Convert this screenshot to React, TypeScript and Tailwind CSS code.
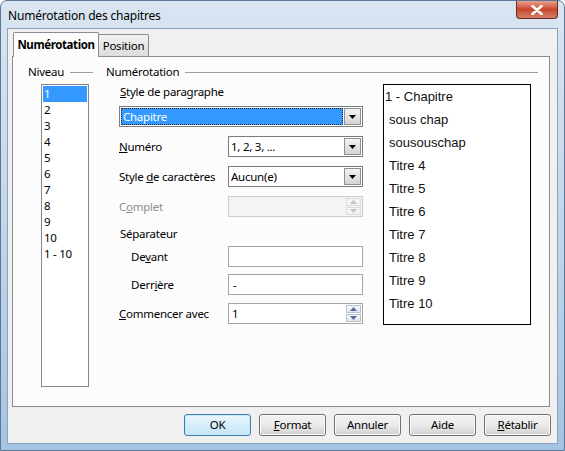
import React from "react";

const ui = { fontFamily: '"Noto Sans", "Open Sans", sans-serif' };
const arial = { fontFamily: '"Liberation Sans", Arial, sans-serif' };

function Arrow({ up = false, color = "#000" }: { up?: boolean; color?: string }) {
  return (
    <svg width="7" height="4" viewBox="0 0 7 4">
      <path d={up ? "M0 4 L3.5 0 L7 4 Z" : "M0 0 L7 0 L3.5 4 Z"} fill={color} />
    </svg>
  );
}

function DropButton() {
  return (
    <div className="w-[17px] h-full flex items-center justify-center border border-[#8e8f8f] bg-gradient-to-b from-[#f4f4f4] to-[#d4d4d4]">
      <Arrow />
    </div>
  );
}

function Combo({ value, selected = false, className = "" }: { value: string; selected?: boolean; className?: string }) {
  return (
    <div className={"h-[21px] flex border border-[#7b7b7b] bg-white p-[1px] " + className}>
      {selected ? (
        <div className="flex-1 flex items-center bg-[#3399ff] text-white pl-[2px] outline outline-1 outline-dotted outline-[#222] -outline-offset-1 mr-[1px]">
          {value}
        </div>
      ) : (
        <div className="flex-1 flex items-center pl-[1px] text-black">{value}</div>
      )}
      <DropButton />
    </div>
  );
}

function Spin({ value = "", disabled = false }: { value?: string; disabled?: boolean }) {
  const c = disabled ? "#c4c4c4" : "#4e6d9a";
  const btn = disabled
    ? "border-[#dcdcdc] bg-[#f4f4f4]"
    : "border-[#b9c3d0] bg-gradient-to-b from-[#f8f8f8] to-[#e2e6ea]";
  return (
    <div
      className={
        "w-[135px] h-[21px] flex border p-[1px] " +
        (disabled ? "border-[#c9cdd2] bg-[#f4f4f4]" : "border-[#a5a5a5] bg-white")
      }
    >
      <div className="flex-1 flex items-center pl-[2px]">{value}</div>
      <div className="w-[15px] flex flex-col gap-[1px]">
        <div className={"flex-1 flex items-center justify-center border " + btn}>
          <Arrow up color={c} />
        </div>
        <div className={"flex-1 flex items-center justify-center border " + btn}>
          <Arrow color={c} />
        </div>
      </div>
    </div>
  );
}

function TextBox({ value = "" }: { value?: string }) {
  return (
    <div className="w-[135px] h-[21px] flex items-center border border-[#a5a5a5] bg-white pl-[4px]">{value}</div>
  );
}

function Btn({ children, def = false }: { children: React.ReactNode; def?: boolean }) {
  return (
    <div
      className={
        "w-[67px] h-[22px] flex items-center justify-center rounded-[3px] border text-black " +
        (def
          ? "border-[#3c7fb1] bg-gradient-to-b from-[#eaf6fd] to-[#c4e5f6] shadow-[inset_0_0_0_1px_#c7e8fa]"
          : "border-[#707070] bg-gradient-to-b from-[#f2f2f2] via-[#ebebeb] to-[#d0d0d0] shadow-[inset_0_0_0_1px_#fcfcfc]")
      }
    >
      {children}
    </div>
  );
}

const levels = ["1", "2", "3", "4", "5", "6", "7", "8", "9", "10", "1 - 10"];
const preview = ["1 - Chapitre", "sous chap", "sousouschap", "Titre 4", "Titre 5", "Titre 6", "Titre 7", "Titre 8", "Titre 9", "Titre 10"];

export default function App() {
  return (
    <div
      className="w-[565px] h-[451px] rounded-t-[7px] bg-gradient-to-b from-[#d9e5f1] via-[#c3d6ea] to-[#a4c4e4] border border-[#5a7795] text-[11.5px] tracking-[-0.25px] text-black overflow-hidden"
      style={ui}
    >
      <div className="h-[27px] flex items-start">
        <span className="ml-[7px] mt-[6px] text-[12px] tracking-[-0.2px] text-black">Numérotation des chapitres</span>
        <div className="ml-auto mr-[6px] w-[42px] h-[18px] rounded-b-[4px] border border-t-0 border-[#6b2a22] bg-gradient-to-b from-[#e8a08e] via-[#c8462d] to-[#d2806a] flex items-center justify-center">
          <svg width="12" height="10" viewBox="0 0 12 10">
            <path d="M1.5 1 L10.5 9 M10.5 1 L1.5 9" stroke="#fff" strokeWidth="2.6" strokeLinecap="round" />
          </svg>
        </div>
      </div>

      <div className="ml-[6px] w-[551px] h-[416px] border border-[#8da2b8] bg-[#f0f0f0] flex flex-col">
        {/* tabs */}
        <div className="h-[27px] flex items-end pl-[5px]">
          <div className="w-[86px] h-[25px] -mb-px z-10 border border-b-0 border-[#898c95] bg-[#fcfcfc] rounded-t-[2px] flex items-center justify-center font-bold tracking-[-0.4px]">
            Numérotation
          </div>
          <div className="w-[50px] h-[22px] border border-l-0 border-b-0 border-[#898c95] bg-gradient-to-b from-[#f2f2f2] to-[#dcdcdc] rounded-tr-[2px] flex items-center justify-center">
            Position
          </div>
        </div>

        {/* panel */}
        <div className="ml-[4px] w-[538px] h-[351px] border border-[#898c95] bg-[#fcfcfc] flex">
          {/* Niveau */}
          <div className="ml-[15px] mt-[7px] w-[65px] flex flex-col">
            <div className="h-[16px] flex items-center">
              <span>Niveau</span>
              <div className="flex-1 ml-[6px] h-px bg-[#a0a0a0]" />
            </div>
            <div className="ml-[13px] mt-[4px] w-[48px] h-[303px] border border-[#828790] bg-white pt-px px-px">
              {levels.map((l, i) => (
                <div
                  key={l}
                  className={"h-[16px] flex items-center pl-[1px] " + (i === 0 ? "bg-[#3399ff] text-white" : "")}
                >
                  {l}
                </div>
              ))}
            </div>
          </div>

          {/* Numérotation */}
          <div className="ml-[13px] mt-[7px] w-[432px] flex flex-col">
            <div className="h-[16px] flex items-center">
              <span>Numérotation</span>
              <div className="flex-1 ml-[6px] h-px bg-[#a0a0a0]" />
            </div>
            <div className="flex mt-[4px]">
              <div className="ml-[13px] w-[244px] flex flex-col">
                <div className="h-[16px] flex items-center pl-[1px]">
                  <span><u>S</u>tyle de paragraphe</span>
                </div>
                <Combo value="Chapitre" selected className="mt-[6px] w-[244px]" />
                <div className="mt-[9px] flex items-center">
                  <span className="w-[109px]"><u>N</u>uméro</span>
                  <Combo value="1, 2, 3, ..." className="w-[135px]" />
                </div>
                <div className="mt-[9px] flex items-center">
                  <span className="w-[109px]">Style <u>d</u>e caractères</span>
                  <Combo value="Aucun(e)" className="w-[135px]" />
                </div>
                <div className="mt-[9px] flex items-center">
                  <span className="w-[109px] text-[#8d8d8d]">C<u>o</u>mplet</span>
                  <Spin disabled />
                </div>
                <div className="mt-[9px] h-[16px] flex items-center pl-[1px]">Séparateur</div>
                <div className="mt-[4px] flex items-center">
                  <span className="w-[109px] pl-[12px]">De<u>v</u>ant</span>
                  <TextBox />
                </div>
                <div className="mt-[7px] flex items-center">
                  <span className="w-[109px] pl-[12px]">Derr<u>i</u>ère</span>
                  <TextBox value="-" />
                </div>
                <div className="mt-[8px] flex items-center">
                  <span className="w-[109px]"><u>C</u>ommencer avec</span>
                  <Spin value="1" />
                </div>
              </div>

              <div className="ml-[20px] w-[148px] h-[241px] border border-black bg-white text-[13px] tracking-normal text-[#111]" style={arial}>
                {preview.map((p, i) => (
                  <div key={p} className={"h-[23px] flex items-center " + (i === 0 ? "pl-[1px]" : "pl-[5px]")}>
                    {p}
                  </div>
                ))}
              </div>
            </div>
          </div>
        </div>

        {/* buttons */}
        <div className="mt-[7px] mr-[6px] flex justify-end gap-[8px]">
          <Btn def>OK</Btn>
          <Btn><u>F</u>ormat</Btn>
          <Btn>Annuler</Btn>
          <Btn>Aide</Btn>
          <Btn><u>R</u>établir</Btn>
        </div>
      </div>
    </div>
  );
}
